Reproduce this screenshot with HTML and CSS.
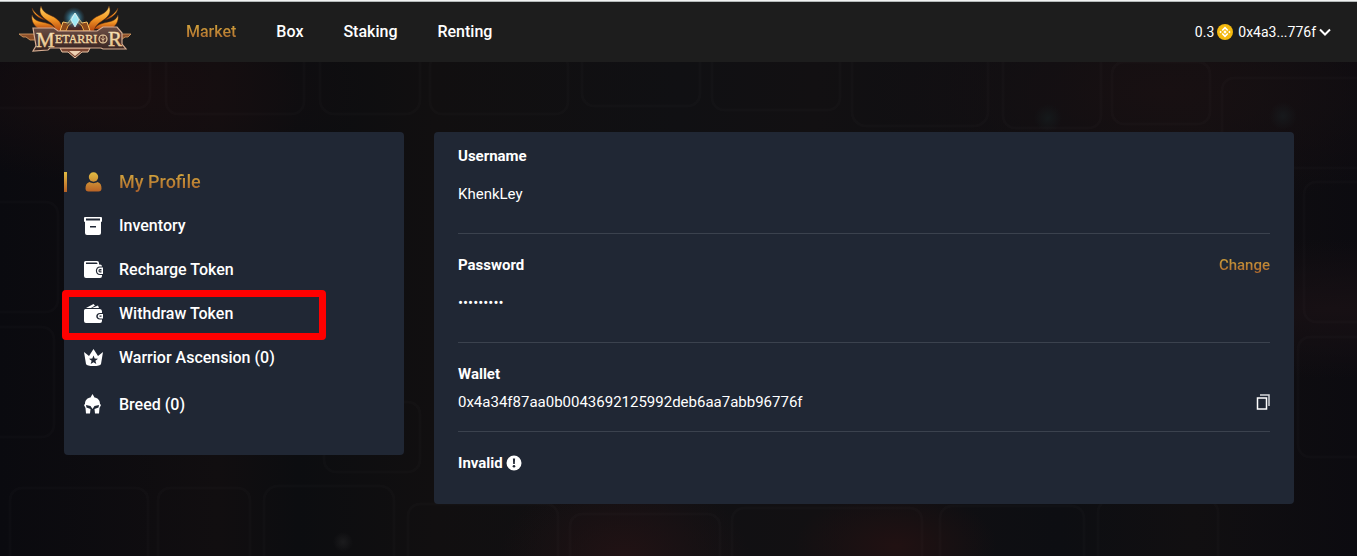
FILE: index.html
```html
<!DOCTYPE html>
<html lang="en">
<head>
    <meta charset="UTF-8">
    <meta name="viewport" content="width=device-width, initial-scale=1.0">
    <title>Metarrior</title>
    <link rel="stylesheet" href="styles.css">
</head>
<body>
    <header class="header">
        <a class="logo" href="#" aria-label="Metarrior">
            <svg width="114" height="57" viewBox="18 3 114 57">
                <defs>
                    <linearGradient id="fire" x1="0" y1="0" x2="0" y2="1">
                        <stop offset="0" stop-color="#ffd76a"/>
                        <stop offset="0.5" stop-color="#f59a26"/>
                        <stop offset="1" stop-color="#b9480f"/>
                    </linearGradient>
                    <linearGradient id="plate" x1="0" y1="0" x2="0" y2="1">
                        <stop offset="0" stop-color="#6d4f45"/>
                        <stop offset="1" stop-color="#35221f"/>
                    </linearGradient>
                    <linearGradient id="letters" x1="0" y1="0" x2="0" y2="1">
                        <stop offset="0" stop-color="#fff3cf"/>
                        <stop offset="1" stop-color="#e0b070"/>
                    </linearGradient>
                    <radialGradient id="glow">
                        <stop offset="0" stop-color="#d8fbff"/>
                        <stop offset="0.4" stop-color="#4fb4d8" stop-opacity="0.6"/>
                        <stop offset="1" stop-color="#2a6f96" stop-opacity="0"/>
                    </radialGradient>
                </defs>
                <g fill="url(#fire)" stroke="#5a250c" stroke-width="0.5">
                    <path d="M32 15C31 21 34 26 39 29H56C52 23 44 23 38 21C35 20 33 18 32 15Z"/>
                    <path d="M32 15C31 21 34 26 39 29H56C52 23 44 23 38 21C35 20 33 18 32 15Z" transform="matrix(-1 0 0 1 150 0)"/>
                    <path d="M41 6C38 13 42 17 48 21C53 24 55 27 56 31H63C62 24 60 21 54 17C48 14 43 13 41 6Z"/>
                    <path d="M41 6C38 13 42 17 48 21C53 24 55 27 56 31H63C62 24 60 21 54 17C48 14 43 13 41 6Z" transform="matrix(-1 0 0 1 150 0)"/>
                    <path d="M32 8C33 14 38 18 45 20C40 16 35 14 32 8Z"/>
                    <path d="M32 8C33 14 38 18 45 20C40 16 35 14 32 8Z" transform="matrix(-1 0 0 1 150 0)"/>
                </g>
                <path d="M60 31L63 22L68 23L75 13L82 23L87 22L90 31Z" fill="#8c4a1c" stroke="#ffc766"/>
                <path d="M66 31L68 26L75 20L82 26L84 31Z" fill="#4a2723" stroke="#f3a83d"/>
                <circle cx="74" cy="18" r="11" fill="url(#glow)"/>
                <path d="M75 13L79 20L75 27L71 20Z" fill="#9fe9f5" stroke="#fff" stroke-width="0.6"/>
                <path d="M19 34H37V40H30L26 37H23Z" fill="#8a4d27" stroke="#d9a066" stroke-width="0.8"/>
                <path d="M131 34H118V40H121L125 37H128Z" fill="#8a4d27" stroke="#d9a066" stroke-width="0.8"/>
                <path d="M60 48H90L88 52H82L75 58L68 52H62Z" fill="#7b4632" stroke="#e9c4a4"/>
                <path d="M69 51L75 56L81 51Z" fill="#eed1b2"/>
                <path d="M33 28H54L58 31H97L103 27H117L122 33V44L126 49H103L101 48H50L48 50L33 51L36 46Z" fill="url(#plate)" stroke="#d8ae92" stroke-width="1.2"/>
                <g fill="url(#letters)" stroke="#f3d9a4" stroke-width="0.4" font-family="Liberation Serif, serif">
                    <text x="36" y="47" font-size="21">M</text>
                    <text x="55" y="43" font-size="12">ETARRI</text>
                    <text x="108" y="46" font-size="21">R</text>
                </g>
                <circle cx="103" cy="39" r="4" fill="#5b382e" stroke="#ecd0a4" stroke-width="1.2"/>
                <path d="M103 35V43M100.500 38L103 40L105.500 38" fill="none" stroke="#ecd0a4" stroke-width="0.8"/>
            </svg>
        </a>
        <nav class="menu">
            <a class="menu-link gold-text" href="#">Market</a>
            <a class="menu-link" href="#">Box</a>
            <a class="menu-link" href="#">Staking</a>
            <a class="menu-link" href="#">Renting</a>
        </nav>
        <button class="account" type="button">
            <span>0.3</span>
            <svg class="coin" width="16" height="16" viewBox="0 0 16 16">
                <circle cx="8" cy="8" r="8" fill="#f3b90f"/>
                <path d="M5.2 6.5L8 3.7L10.8 6.5M5.2 9.5L8 12.3L10.8 9.5" fill="none" stroke="#fff" stroke-width="1.600"/>
                <path d="M8 6.3L9.7 8L8 9.7L6.3 8ZM3.6 6.8L4.8 8L3.6 9.2L2.4 8ZM12.4 6.8L13.6 8L12.4 9.2L11.2 8Z" fill="#fff"/>
            </svg>
            <span>0x4a3...776f</span>
            <svg class="arrow" width="14" height="10" viewBox="0 0 14 10">
                <path d="M2 2.5L7 7.5L12 2.5" fill="none" stroke="#fff" stroke-width="2"/>
            </svg>
        </button>
    </header>

    <main class="page">
        <!-- dim brick wall behind the cards -->
        <svg class="wall" viewBox="0 0 1357 494" preserveAspectRatio="xMidYMid slice" aria-hidden="true">
            <g fill="none" stroke="#fff" stroke-opacity="0.015" stroke-width="3">
                <rect x="-40" y="-20" width="190" height="66" rx="12"/>
                <rect x="166" y="-30" width="138" height="82" rx="12"/>
                <rect x="320" y="-20" width="100" height="72" rx="14"/>
                <rect x="430" y="-8" width="138" height="60" rx="12"/>
                <rect x="582" y="-12" width="118" height="56" rx="12"/>
                <rect x="712" y="-16" width="128" height="64" rx="12"/>
                <rect x="852" y="-20" width="136" height="84" rx="14"/>
                <rect x="1003" y="-30" width="98" height="96" rx="12"/>
                <rect x="1112" y="0" width="98" height="62" rx="12"/>
                <rect x="1222" y="16" width="150" height="90" rx="12"/>
                <rect x="1304" y="120" width="90" height="140" rx="12"/>
                <rect x="1298" y="275" width="90" height="120" rx="12"/>
                <rect x="-20" y="140" width="78" height="110" rx="12"/>
                <rect x="-30" y="265" width="84" height="110" rx="12"/>
                <rect x="10" y="426" width="138" height="90" rx="12"/>
                <rect x="158" y="426" width="92" height="90" rx="12"/>
                <rect x="264" y="424" width="130" height="100" rx="14"/>
                <rect x="324" y="340" width="96" height="70" rx="12"/>
                <rect x="408" y="442" width="150" height="80" rx="12"/>
                <rect x="570" y="452" width="150" height="80" rx="12"/>
                <rect x="732" y="446" width="190" height="80" rx="12"/>
                <rect x="940" y="444" width="144" height="80" rx="12"/>
                <rect x="1098" y="438" width="120" height="80" rx="12"/>
            </g>
        </svg>

        <div class="profile">
            <aside class="card sidebar">
                <a class="side-link active" href="#">
                    <svg width="20" height="20" viewBox="0 0 20 20">
                        <defs>
                            <linearGradient id="gold" x1="0" y1="0" x2="0" y2="20" gradientUnits="userSpaceOnUse">
                                <stop offset="0" stop-color="#e3bd43"/>
                                <stop offset="1" stop-color="#b86125"/>
                            </linearGradient>
                        </defs>
                        <g fill="url(#gold)">
                            <circle cx="9.500" cy="5" r="4.700"/>
                            <path d="M5.500 10C7.500 11.500 11.500 11.500 13.500 10C16.500 11 17.500 13 17.500 16.500C17.500 18.500 16.500 19.400 14.500 19.400H4.500C2.500 19.400 1.500 18.500 1.500 16.500C1.500 13 2.500 11 5.500 10Z"/>
                        </g>
                    </svg>
                    <span class="gold-text">My Profile</span>
                </a>
                <a class="side-link" href="#">
                    <svg width="20" height="20" viewBox="0 0 20 20">
                        <path fill="#fff" fill-rule="evenodd" d="M1 1H17Q18 1 18 2V5Q18 6 17 6H1Q0 6 0 5V2Q0 1 1 1ZM2 2.500V4.500H16V2.500ZM1 6H17V17Q17 19 15 19H3Q1 19 1 17ZM6 10V11.500H12V10Z"/>
                    </svg>
                    <span>Inventory</span>
                </a>
                <a class="side-link" href="#">
                    <svg width="20" height="20" viewBox="0 0 20 20">
                        <path fill="#fff" fill-rule="evenodd" d="M1.500 1H13Q15 1 15 3V4.500H16Q18 4.500 18 6.500H16C10.500 6.500 10.500 15 16 15H18V16Q18 18 16 18H2Q0 18 0 16V2.500Q0 1 1.500 1ZM2 2.500V4H13.500Q13.500 2.500 12.500 2.500Z"/>
                        <path fill="#fff" fill-rule="evenodd" d="M16 7.500H19V14H16C12 14 12 7.500 16 7.500ZM16 9C14 9 14 12.500 16 12.500H17.500V11.200H15.500V10.400H17.500V9Z"/>
                    </svg>
                    <span>Recharge Token</span>
                </a>
                <a class="side-link marked" href="#">
                    <svg width="20" height="20" viewBox="0 0 20 20">
                        <path fill="#fff" d="M2 4L9.500 0L11 1.500L7 4ZM8 4L14 1.500L15 4Z"/>
                        <path fill="#fff" d="M1.500 5H16Q18 5 18 7.500V9H16C11 9 11 15.500 16 15.500H18V17Q18 19 16 19H2Q0 19 0 17V6.500Q0 5 1.500 5Z"/>
                        <path fill="#fff" fill-rule="evenodd" d="M16 10H19V14.500H16C13 14.500 13 10 16 10ZM15.500 11.500V12.800H17.500V11.500Z"/>
                    </svg>
                    <span>Withdraw Token</span>
                </a>
                <a class="side-link" href="#">
                    <svg width="20" height="20" viewBox="0 0 20 20">
                        <path fill="#fff" fill-rule="evenodd" d="M0 4L5 8L9.500 1L14 8L19 4L17 16Q16 18 9.500 18Q3 18 2 16ZM9.500 7.500L8.300 10.500L5 10.700L7.600 12.800L6.700 16L9.500 14.200L12.300 16L11.400 12.800L14 10.700L10.700 10.500Z"/>
                    </svg>
                    <span>Warrior Ascension (0)</span>
                </a>
                <a class="side-link tall" href="#">
                    <svg width="20" height="22" viewBox="0 0 20 22">
                        <path fill="#fff" d="M8.500 0L10.500 3.500C14 4 16 6.500 16 10L17 11L15.500 14L15 19.500H11L10.500 15L14.500 13.500L15 11L10.500 12L8.500 15L6.500 12L2 11L2.500 13.500L6.500 15L6 19.500H2L1.500 14L0 11L1 10C1 6.500 3 4 6.500 3.500Z"/>
                    </svg>
                    <span>Breed (0)</span>
                </a>
            </aside>

            <section class="card details">
                <div class="row first">
                    <h2 class="label">Username</h2>
                    <p class="value">KhenkLey</p>
                </div>
                <div class="row">
                    <div class="line">
                        <label class="label" for="password">Password</label>
                        <a class="change gold-text" href="#">Change</a>
                    </div>
                    <input class="value password" id="password" type="password" value="metarrior" readonly>
                </div>
                <div class="row wallet">
                    <h2 class="label">Wallet</h2>
                    <div class="line">
                        <p class="value">0x4a34f87aa0b0043692125992deb6aa7abb96776f</p>
                        <button class="copy" type="button" aria-label="Copy">
                            <svg width="14" height="16" viewBox="0 0 14 16">
                                <path d="M4 1H13V12" fill="none" stroke="#d5d7da" stroke-width="1.500"/>
                                <rect x="1.500" y="4" width="9" height="11" fill="none" stroke="#fff" stroke-width="1.500"/>
                            </svg>
                        </button>
                    </div>
                </div>
                <div class="row status">
                    <h2 class="label">Invalid</h2>
                    <svg width="16" height="16" viewBox="0 0 16 16">
                        <circle cx="8" cy="8" r="7.500" fill="#fff"/>
                        <path d="M6.900 3.500H9.100L8.800 9H7.200Z" fill="#202734"/>
                        <circle cx="8" cy="11.300" r="1.300" fill="#202734"/>
                    </svg>
                </div>
            </section>
        </div>
    </main>
</body>
</html>
```
FILE: styles.css
```css
*,
*::before,
*::after {
    box-sizing: border-box;
}

body {
    margin: 0;
    min-height: 100vh;
    display: flex;
    flex-direction: column;
    font-family: Roboto, "Liberation Sans", sans-serif;
    font-size: 15px;
    line-height: 24px;
    color: #fff;
    background-color: #0e0d11;
}

h2,
p {
    margin: 0;
    font-size: 15px;
}

a {
    color: #fff;
    text-decoration: none;
}

svg {
    display: block;
    flex-shrink: 0;
}

button {
    padding: 0;
    border: none;
    background: none;
    color: #fff;
    font-family: inherit;
    line-height: inherit;
    cursor: pointer;
}

.gold-text {
    color: transparent;
    background: linear-gradient(180deg, #dcb440, #a3582a);
    -webkit-background-clip: text;
    background-clip: text;
}

/* header */
.header {
    display: flex;
    align-items: center;
    height: 62px;
    padding: 0 25px 0 18px;
    background-color: #1d1d1d;
    border-top: 1px solid #f1f3f3;
    box-shadow: inset 0 1px 0 #b4b9b9;
}

.menu {
    display: flex;
    flex: 1;
    gap: 40px;
    margin-left: 54px;
}

.menu-link {
    font-size: 16px;
    font-weight: 500;
}

.account {
    display: flex;
    align-items: center;
    font-size: 14px;
}

.coin {
    margin: 0 5px 0 3px;
}

.arrow {
    margin-left: 2px;
}

/* profile */
.page {
    position: relative;
    flex: 1;
    padding: 70px 63px 52px 64px;
    background:
        radial-gradient(circle at 1283px 54px, #17191c, transparent 14px),
        radial-gradient(circle at 1048px 56px, #15191b, transparent 14px),
        radial-gradient(circle at 343px 480px, #1b1b1d, transparent 10px),
        radial-gradient(ellipse at 9% 6%, #180e10, transparent 14%),
        radial-gradient(ellipse at 46% 100%, #211214, transparent 12%),
        radial-gradient(ellipse at 66% 98%, #211112, transparent 8%),
        radial-gradient(ellipse at 86% 6%, #181012, transparent 18%),
        radial-gradient(ellipse at 98% 50%, #171014, transparent 20%),
        linear-gradient(90deg, #0a0a0f, #110e10 16%, #0c0d10 22%, #110f10 32%, #101013 50%, #121012 60%, #0d0e12 78%, #110f11 88%, #0c0b10);
}

.wall {
    position: absolute;
    inset: 0;
    width: 100%;
    height: 100%;
}

.profile {
    position: relative;
    display: grid;
    grid-template-columns: 340px 1fr;
    gap: 30px;
    align-items: start;
    max-width: 1230px;
    margin: 0 auto;
}

.card {
    background-color: #202734;
    border-radius: 4px;
}

.sidebar {
    padding: 28px 0 25px;
}

.side-link {
    position: relative;
    display: flex;
    align-items: center;
    gap: 15px;
    height: 44px;
    padding-left: 20px;
    font-size: 16px;
    font-weight: 500;
}

.side-link.active {
    font-size: 18px;
}

.side-link.tall {
    height: 50px;
}

.side-link.active::before {
    content: "";
    position: absolute;
    left: 0;
    width: 3px;
    height: 20px;
    background: linear-gradient(180deg, #e3bd43, #b86125);
}

.side-link.marked::after {
    content: "";
    position: absolute;
    top: -2px;
    left: -2px;
    width: 264px;
    height: 50px;
    border: 7px solid #ff0000;
    border-radius: 4px;
}

.details {
    padding: 0 24px;
}

.row {
    padding: 19px 0 27px;
    border-bottom: 1px solid #3b424e;
}

.row.first {
    padding-top: 12px;
}

.row.wallet {
    padding-bottom: 17px;
}

.row.status {
    display: flex;
    align-items: center;
    gap: 3px;
    padding-bottom: 29px;
    border-bottom: none;
}

.line {
    display: flex;
    align-items: center;
    justify-content: space-between;
}

.label {
    font-weight: 700;
}

.value {
    margin-top: 14px;
}

.wallet .value {
    margin-top: 4px;
}

.copy {
    margin-top: 4px;
}

.password {
    display: block;
    width: 100%;
    height: 24px;
    padding: 0;
    border: none;
    outline: none;
    background: none;
    color: #fff;
    font-family: inherit;
    font-size: 15px;
}

.change {
    font-weight: 500;
}
```
